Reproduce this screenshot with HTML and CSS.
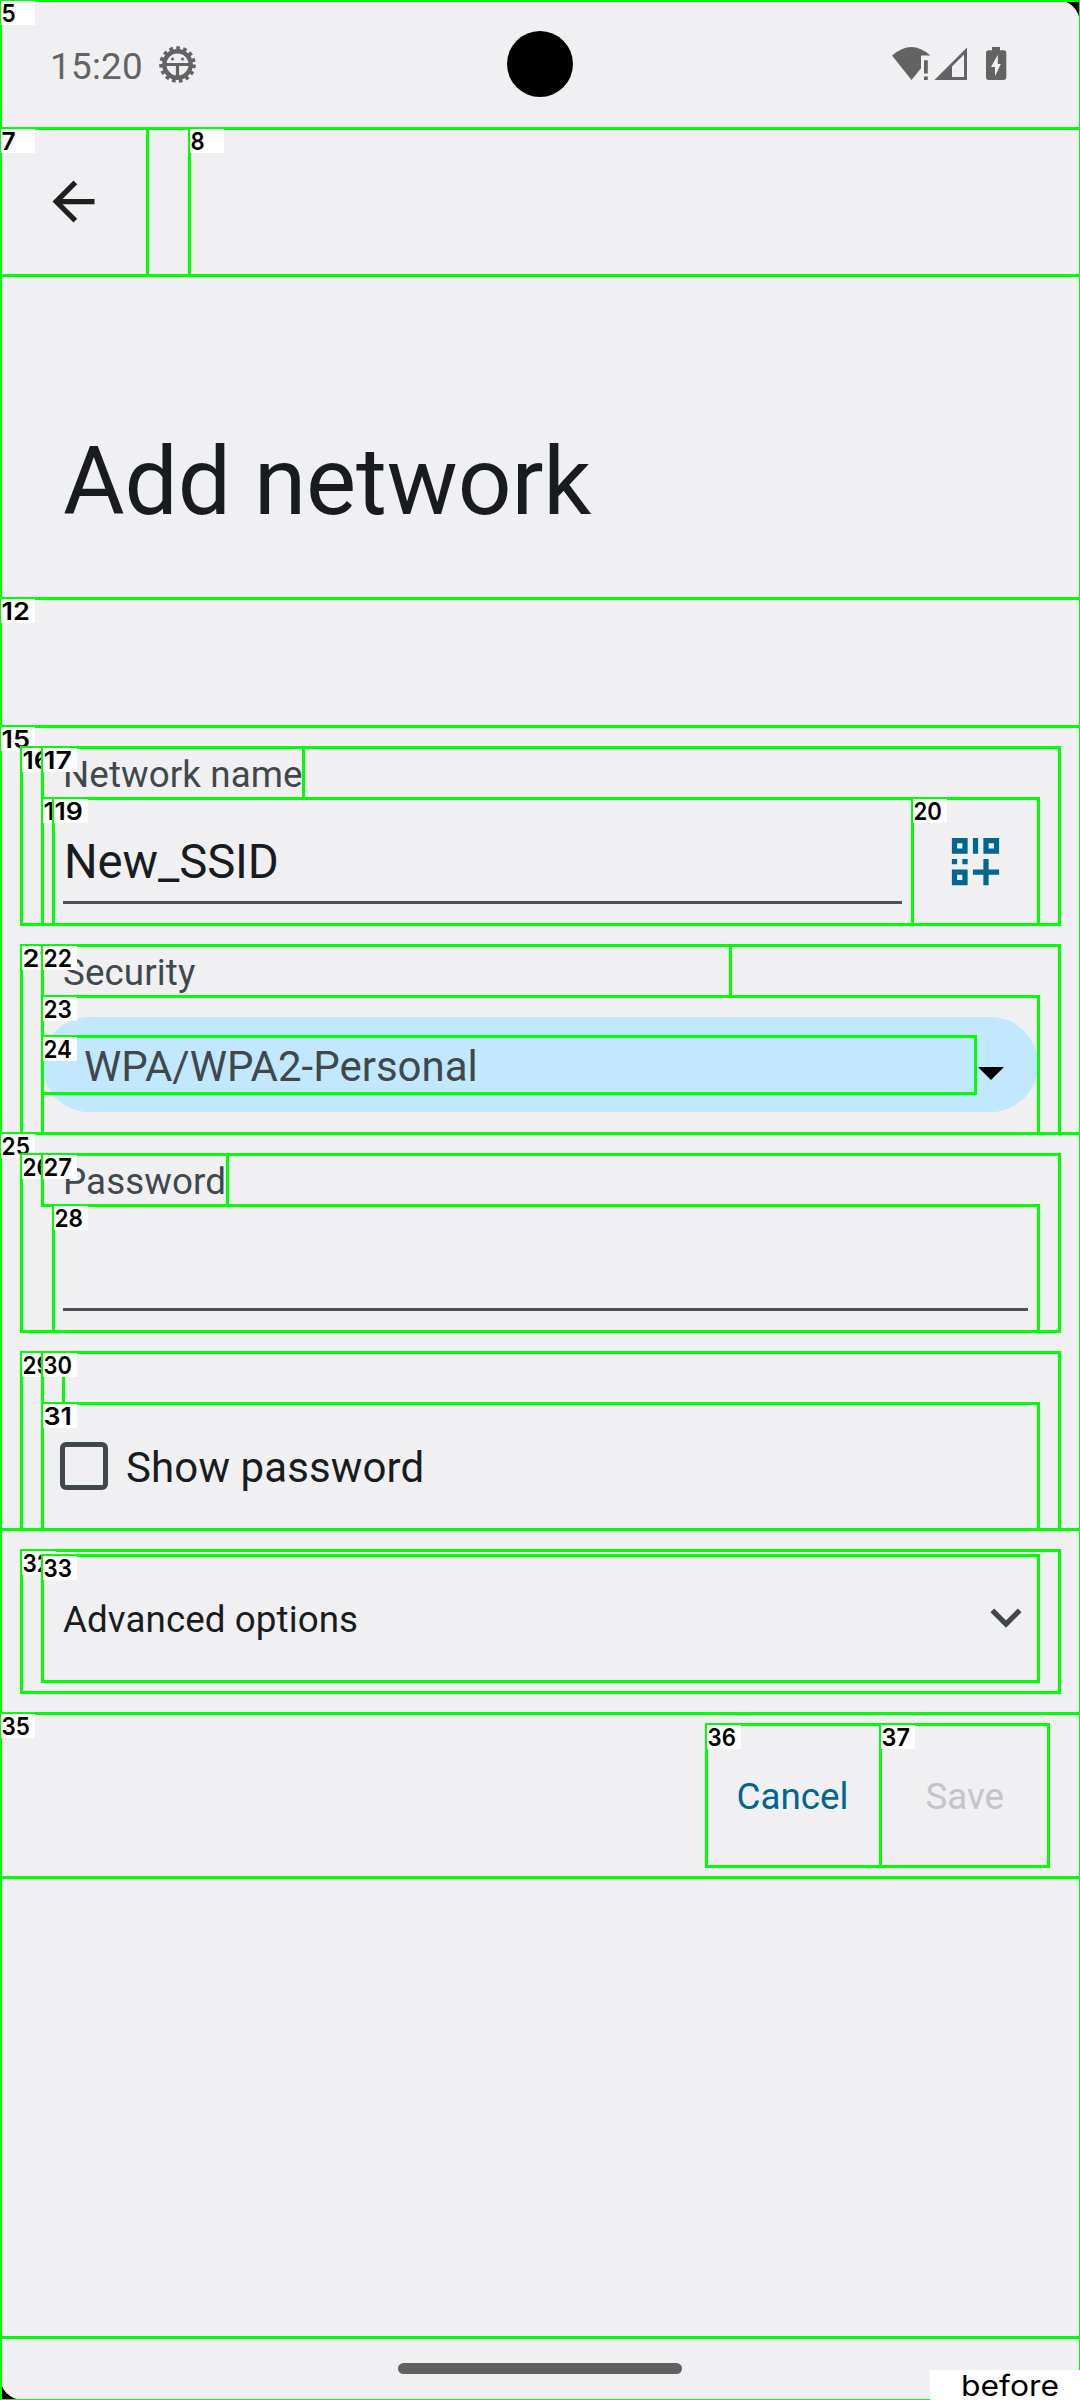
FILE: index.html
```html
<!DOCTYPE html>
<html lang="en">
<head>
<meta charset="utf-8">
<title>Add network</title>
<link rel="stylesheet" href="styles.css">
</head>
<body>
<main class="screen">
  <header class="status">
    <span class="clock">15:20</span>
    <svg class="bug" viewBox="-18.500 -18.500 37 37">
      <circle r="13.200" fill="none" stroke="#636363" stroke-width="4.400"/>
      <circle r="16.300" fill="none" stroke="#636363" stroke-width="4" stroke-dasharray="3.600 3.228"/>
      <path d="M-13-1.500H13V1.500H1.600V13H-1.600V1.500H-13Z" fill="#636363"/>
      <circle cx="-5" cy="-5.500" r="1.500" fill="#636363"/><circle cx="5" cy="-5.500" r="1.500" fill="#636363"/>
    </svg>
    <span class="camera"></span>
    <svg class="signals" viewBox="0 0 116 34">
      <path d="M0 8.600Q19.500-8.600 38.500 8.600H29V21.300L19.500 33Z"/>
      <path d="M32 13.200h3.800v13.200h-3.800zM32 29.500h3.800v3.500h-3.800z"/>
      <path fill-rule="evenodd" d="M42.500 33L75 .500V33ZM60 19.500V30H72V7.600Z"/>
      <path fill-rule="evenodd" d="M100 0h8v3.200h3.600q2.700 0 2.700 2.700v24.400q0 2.700-2.700 2.700H96.700q-2.700 0-2.700-2.700V5.900q0-2.700 2.700-2.700h3.300zM105.800 7.700L99 20.100h4V29.300L108.800 17h-3z"/>
    </svg>
  </header>
  <nav class="toolbar">
    <svg class="back" viewBox="0 0 24 24"><path d="M20 11H7.830l5.590-5.590L12 4l-8 8 8 8 1.410-1.410L7.830 13H20z"/></svg>
  </nav>
  <h1 class="title">Add network</h1>
  <section class="field name">
    <label class="label">Network name</label>
    <div class="row">
      <div class="input">New_SSID</div>
      <svg class="qr" viewBox="0 0 24 24"><path fill-rule="evenodd" d="M3 3h6v6H3zM5 5v2h2V5zM11 3h2v6h-2zM15 3h6v6h-6zM17 5v2h2V5zM3 11h2v2H3zM7 11h2v2H7zM3 15h6v6H3zM5 17v2h2v-2zM15 11h2v4h4v2h-4v4h-2v-4h-4v-2h4z"/></svg>
    </div>
  </section>
  <section class="field security">
    <label class="label">Security</label>
    <div class="spinner"><span>WPA/WPA2-Personal</span><i class="caret"></i></div>
  </section>
  <section class="field password">
    <label class="label">Password</label>
    <div class="input"></div>
  </section>
  <section class="show"><i class="box"></i><span>Show password</span></section>
  <section class="advanced"><span>Advanced options</span>
    <svg class="chevron" viewBox="0 0 32 20"><path d="M2.300 2.300L16 16L29.700 2.300"/></svg>
  </section>
  <footer class="actions"><span class="cancel">Cancel</span><span class="save">Save</span></footer>
  <div class="home"></div>
</main>
<svg class="overlay" viewBox="0 0 1080 2400"></svg>
<script src="overlay.js"></script>
</body>
</html>
```
FILE: styles.css
```css
* { box-sizing: border-box; }
body { margin: 0; background: #000; font-family: Roboto, sans-serif; }
.screen { position: relative; width: 1080px; height: 2400px; overflow: hidden; display: flex; flex-direction: column; background: #f0f0f3; border-radius: 23px; font-size: 36.75px; line-height: 44px; color: #191c1e; }
.status { position: relative; height: 128px; flex: none; display: flex; align-items: flex-start; padding: 45px 74px 0 50px; color: #636363; }
.clock { width: 108.500px; letter-spacing: 0.300px; }
.bug { width: 37px; height: 37px; margin-top: 1px; }
.camera { position: absolute; left: 507px; top: 31px; width: 66px; height: 66px; border-radius: 50%; background: #000; }
.signals { width: 116px; height: 34px; margin: 2px -2px 0 auto; fill: #636363; }
.toolbar { height: 147px; flex: none; padding: 42px; }
.back { display: block; width: 63px; height: 63px; fill: #1f1f1f; }
.title { margin: 0; height: 472px; flex: none; padding: 152px 63px 0; font-size: 94.5px; font-weight: 400; line-height: 110px; letter-spacing: -0.150px; }
.field { padding: 0 42px; flex: none; }
.label { display: block; height: 51px; padding: 6px 21px 0; color: #40484c; letter-spacing: 0.100px; }
.name { height: 198px; }
.row { display: flex; align-items: center; height: 126px; }
.input { flex: 1; border-bottom: 3px solid #4a5256; }
.row .input { align-self: flex-start; height: 106px; margin: 0 11px 0 21px; padding: 34px 0 0 1px; font-size: 47.250px; line-height: 60px; letter-spacing: -0.100px; }
.qr { width: 63px; height: 63px; margin: 0 31px; fill: #00668b; }
.security { height: 209px; }
.spinner { height: 95px; margin-top: 21px; display: flex; align-items: center; padding: 0 34px 0 42px; border-radius: 48px; background: #c2e8ff; font-size: 42px; line-height: 50px; color: #40484c; }
.spinner span { margin-top: 5px; flex: 1; }
.caret { border: 13px solid transparent; border-top-color: #000; border-bottom: 0; margin-top: 18px; }
.password { height: 198px; }
.password .input { height: 106px; margin: 0 10px 0 21px; }
.show { height: 177px; flex: none; padding: 91px 60px 0; display: flex; font-size: 42px; line-height: 50px; letter-spacing: 0.120px; }
.box { width: 48px; height: 48px; margin: -1px 18px 0 0; border: 5.500px solid #40484c; border-radius: 6px; }
.advanced { height: 184px; flex: none; display: flex; padding: 69px 58px 0 63px; justify-content: space-between; letter-spacing: 0.080px; }
.chevron { width: 32px; height: 20px; margin-top: 10px; fill: none; stroke: #40484c; stroke-width: 5.250; }
.actions { height: 624px; flex: none; display: flex; justify-content: flex-end; padding: 62px 76px 0; gap: 77px; }
.cancel { color: #00668b; }
.save { color: #c4c5c8; }
.home { width: 284px; height: 11px; margin: 26px auto 0; border-radius: 6px; background: #606060; }
.overlay { position: absolute; inset: 0; width: 1080px; height: 2400px; }
.overlay rect { fill: none; stroke: #0f0; stroke-width: 3; }
.overlay .tag { fill: #fff; stroke: none; }
.overlay text { font-family: Inter, sans-serif; font-size: 24.500px; font-weight: 600; fill: #000; }
.overlay .caption { font-size: 29px; font-weight: 400; }
```
FILE: overlay.js
```js
// Each entry: label, left, top, right, bottom of an element's bounds.
const bounds = [
  ["", 0, 0, 1080, 2400], ["5", 0, 0, 1080, 128], ["7", 0, 128, 147, 275],
  ["8", 189, 128, 1080, 275], ["", 0, 275, 1080, 598], ["12", 0, 598, 1080, 2337],
  ["15", 0, 726, 1080, 1133], ["16", 21, 747, 1059, 924], ["17", 42, 747, 303, 798],
  ["18", 42, 798, 1038, 924], ["19", 53, 798, 912, 924], ["20", 912, 798, 1038, 924],
  ["21", 21, 945, 1059, 1133], ["22", 42, 945, 730, 996], ["23", 42, 996, 1038, 1133],
  ["24", 42, 1036, 975, 1093], ["25", 0, 1133, 1080, 1529], ["26", 21, 1154, 1059, 1331],
  ["27", 42, 1154, 227, 1205], ["28", 53, 1205, 1038, 1331], ["29", 21, 1352, 1059, 1529],
  ["30", 42, 1352, 63, 1403], ["31", 42, 1403, 1038, 1529], ["32", 21, 1550, 1059, 1692],
  ["33", 42, 1555, 1038, 1681], ["35", 0, 1713, 1080, 1877], ["36", 706, 1724, 880, 1866],
  ["37", 880, 1724, 1048, 1866]
];
const svg = document.querySelector(".overlay");
function add(name, attrs, text) {
  const el = document.createElementNS("http://www.w3.org/2000/svg", name);
  for (const key in attrs) el.setAttribute(key, attrs[key]);
  if (text) el.textContent = text;
  svg.appendChild(el);
}
for (const [label, l, t, r, b] of bounds) {
  add("rect", { x: l + 0.5, y: t + 0.5, width: r - l, height: b - t });
  if (!label) continue;
  add("rect", { class: "tag", x: l + 1, y: t + 1, width: 34, height: 24 });
  add("text", { x: l + 1.5, y: t + 22, textLength: label.length * 14.2, lengthAdjust: "spacingAndGlyphs" }, label);
}
add("rect", { class: "tag", x: 930, y: 2370, width: 150, height: 30 });
add("text", { class: "caption", x: 961, y: 2396, textLength: 98, lengthAdjust: "spacingAndGlyphs" }, "before");
```
